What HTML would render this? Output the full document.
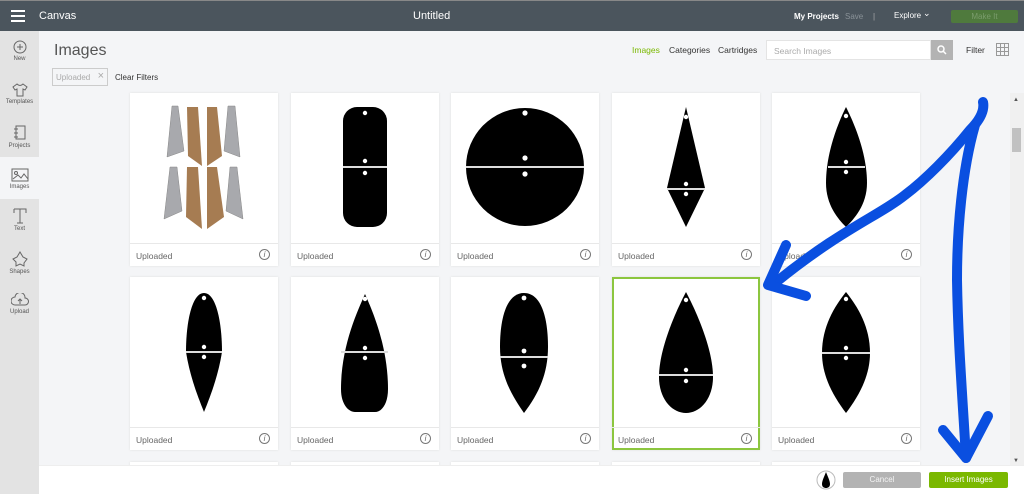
<!DOCTYPE html>
<html><head><meta charset="utf-8"><style>
*{margin:0;padding:0;box-sizing:border-box}
html,body{width:1024px;height:494px;overflow:hidden}
body{background:#f4f5f7;font-family:"Liberation Sans",sans-serif;position:relative}
.hdr{position:absolute;left:0;top:0;width:1024px;height:31px;background:#4b555d;border-top:1px solid #888;color:#fff;font-size:11px}
.hdr span{position:absolute;top:9px}
.side{position:absolute;left:0;top:31px;width:39px;height:463px;background:#e3e3e3}
.si{position:absolute;left:0;width:39px;text-align:center;font-size:6px;color:#555}
.card{position:absolute;width:148px;height:173px;background:#fff;box-shadow:0 0 2px #ddd}
.card svg{position:absolute;left:0;top:0}
.ft{position:absolute;left:0;top:150px;width:148px;height:23px;border-top:1px solid #e8e8e8;font-size:8.5px;color:#666;padding:7px 0 0 6px}
.ft i{position:absolute;right:8px;top:5px;width:11px;height:11px;border:1px solid #777;border-radius:50%;font-size:8px;line-height:9px;text-align:center;color:#666;font-style:italic}
</style></head><body>
<div class="hdr">
 <div style="position:absolute;left:11px;top:9px;width:14px;height:2px;background:#fff;box-shadow:0 5px 0 #fff,0 10px 0 #fff"></div>
 <span style="left:39px">Canvas</span>
 <span style="left:413px">Untitled</span>
 <span style="left:794px;font-size:8px;top:11px;font-weight:bold">My Projects</span>
 <span style="left:845px;font-size:8px;top:11px;color:#8a9298">Save</span>
 <span style="left:873px;font-size:8px;top:11px;color:#aaa">|</span>
 <span style="left:894px;font-size:8px;top:10px">Explore</span>
 <span style="left:923px;top:7px;font-size:9px">&#8964;</span>
 <div style="position:absolute;left:951px;top:9px;width:67px;height:13px;background:#4f7a3d;border-radius:2px;color:#7a9c6c;font-size:8px;text-align:center;line-height:13px">Make It</div>
</div>
<div class="side">
 <div class="si" style="top:126px;height:42px;background:#f4f5f7"></div>
 <div class="si" style="top:9px"><svg width="14" height="14"><circle cx="7" cy="7" r="6" fill="none" stroke="#666"/><path d="M7 4v6M4 7h6" stroke="#666"/></svg><br>New</div>
 <div class="si" style="top:52px"><svg width="16" height="14"><path d="M5 1 1 4l2 3 2-1v7h6V6l2 1 2-3-4-3q-3 3-6 0z" fill="none" stroke="#666"/></svg><br>Templates</div>
 <div class="si" style="top:94px"><svg width="14" height="16"><rect x="3" y="1" width="9" height="13" fill="none" stroke="#666"/><path d="M1 4h4M1 8h4M1 12h4" stroke="#666"/></svg><br>Projects</div>
 <div class="si" style="top:137px"><svg width="18" height="14"><rect x="1" y="1" width="16" height="12" fill="none" stroke="#666"/><circle cx="5" cy="5" r="1.5" fill="none" stroke="#666"/><path d="M2 11l5-4 3 3 3-4 4 5" fill="none" stroke="#666"/></svg><br>Images</div>
 <div class="si" style="top:177px"><svg width="16" height="16"><path d="M2 1h12v4M8 1v14M5 15h6M2 1v4" fill="none" stroke="#666"/></svg><br>Text</div>
 <div class="si" style="top:220px"><svg width="16" height="16"><path d="M8 1l3 5 4 2-3 4 0 3-4-2-4 2 0-4-3-3 4-2z" fill="none" stroke="#666"/></svg><br>Shapes</div>
 <div class="si" style="top:262px"><svg width="18" height="14"><path d="M4 12a4 4 0 010-8 5 5 0 0110 1 3 3 0 010 7z" fill="none" stroke="#666"/><path d="M9 11V6M7 8l2-2 2 2" fill="none" stroke="#666"/></svg><br>Upload</div>
</div>
<div style="position:absolute;left:54px;top:42px;font-size:16px;color:#555">Images</div>
<div style="position:absolute;left:52px;top:68px;width:56px;height:18px;border:1px solid #ccc;background:#f4f5f7;font-size:8px;color:#aaa;padding:4px 0 0 3px">Uploaded <span style="font-size:11px;position:absolute;top:1px;right:3px">&#215;</span></div>
<div style="position:absolute;left:115px;top:73px;font-size:8px;color:#333">Clear Filters</div>
<div style="position:absolute;left:632px;top:45px;font-size:8.5px;color:#7ab800">Images</div>
<div style="position:absolute;left:669px;top:45px;font-size:8.5px;color:#333">Categories</div>
<div style="position:absolute;left:718px;top:45px;font-size:8.5px;color:#333">Cartridges</div>
<div style="position:absolute;left:766px;top:40px;width:165px;height:20px;background:#fff;border:1px solid #e4e4e4;font-size:8.5px;color:#aaa;padding:5px 0 0 7px">Search Images</div>
<div style="position:absolute;left:931px;top:40px;width:22px;height:20px;background:#b3b3b3"><svg width="22" height="20"><circle cx="10" cy="9" r="3" fill="none" stroke="#fff" stroke-width="1.5"/><path d="M12 11l3 3" stroke="#fff" stroke-width="1.5"/></svg></div>
<div style="position:absolute;left:966px;top:45px;font-size:8.5px;color:#333">Filter</div>
<svg style="position:absolute;left:996px;top:43px" width="13" height="13"><path d="M.5.5h12v12H.5zM4.5.5v12M8.5.5v12M.5 4.5h12M.5 8.5h12" fill="none" stroke="#999"/></svg>

<div class="card" style="left:130px;top:93px"><svg width="148" height="150">
<g fill="#a8a9ad" stroke="#888" stroke-width=".5"><polygon points="42,13 48,13 54,58 37,64"/><polygon points="98,13 105,13 110,64 94,58"/><polygon points="40,74 47,74 52,118 34,126"/><polygon points="100,74 107,74 113,126 96,118"/></g>
<g fill="#a67c52"><polygon points="57,14 68,14 72,73 58,63"/><polygon points="77,14 87,14 92,63 77,73"/><polygon points="57,74 68,74 72,136 56,124"/><polygon points="77,74 87,74 94,124 77,136"/></g></svg>
<div class="ft">Uploaded<i>i</i></div></div>

<div class="card" style="left:291px;top:93px"><svg width="148" height="150"><rect x="52" y="14" width="44" height="120" rx="14" fill="#000"/><rect x="52" y="73" width="44" height="2" fill="#ddd"/><g fill="#fff"><circle cx="74" cy="20" r="2.2"/><circle cx="74" cy="68" r="2.2"/><circle cx="74" cy="80" r="2.2"/></g></svg>
<div class="ft">Uploaded<i>i</i></div></div>

<div class="card" style="left:451px;top:93px"><svg width="148" height="150"><circle cx="74" cy="74" r="59" fill="#000"/><rect x="15" y="73" width="118" height="2" fill="#ddd"/><g fill="#fff"><circle cx="74" cy="20" r="2.6"/><circle cx="74" cy="65" r="2.6"/><circle cx="74" cy="81" r="2.6"/></g></svg>
<div class="ft">Uploaded<i>i</i></div></div>

<div class="card" style="left:612px;top:93px"><svg width="148" height="150"><polygon points="74,14 93,95 74,134 55,95" fill="#000"/><rect x="55" y="95" width="38" height="2" fill="#ddd"/><g fill="#fff"><circle cx="74" cy="24" r="2.2"/><circle cx="74" cy="91" r="2.2"/><circle cx="74" cy="101" r="2.2"/></g></svg>
<div class="ft">Uploaded<i>i</i></div></div>

<div class="card" style="left:772px;top:93px"><svg width="148" height="150"><path d="M74 14C66 30 54 60 54 90 54 112 66 126 74 134 82 126 95 112 95 90 95 60 82 30 74 14z" fill="#000"/><rect x="56" y="73" width="37" height="2" fill="#ddd"/><g fill="#fff"><circle cx="74" cy="23" r="2.2"/><circle cx="74" cy="69" r="2.2"/><circle cx="74" cy="79" r="2.2"/></g></svg>
<div class="ft">Uploaded<i>i</i></div></div>

<div class="card" style="left:130px;top:277px"><svg width="148" height="150"><path d="M74 16C62 16 56 45 56 75 60 100 68 120 74 135 80 120 88 100 92 75 92 45 86 16 74 16z" fill="#000"/><rect x="56" y="74" width="36" height="2" fill="#ddd"/><g fill="#fff"><circle cx="74" cy="21" r="2.2"/><circle cx="74" cy="70" r="2.2"/><circle cx="74" cy="80" r="2.2"/></g></svg>
<div class="ft">Uploaded<i>i</i></div></div>

<div class="card" style="left:291px;top:277px"><svg width="148" height="150"><path d="M74 17C66 35 50 70 50 112 50 128 58 135 64 135H84C90 135 97 128 97 112 97 70 82 35 74 17z" fill="#000"/><rect x="50" y="74" width="47" height="2" fill="#ddd"/><g fill="#fff"><circle cx="74" cy="22" r="2.2"/><circle cx="74" cy="71" r="2.2"/><circle cx="74" cy="81" r="2.2"/></g></svg>
<div class="ft">Uploaded<i>i</i></div></div>

<div class="card" style="left:451px;top:277px"><svg width="148" height="150"><path d="M73 16C56 16 49 40 49 70 49 100 62 120 73 136 85 120 97 100 97 70 97 40 90 16 73 16z" fill="#000"/><rect x="49" y="79" width="48" height="2" fill="#ddd"/><g fill="#fff"><circle cx="73" cy="21" r="2.4"/><circle cx="73" cy="74" r="2.4"/><circle cx="73" cy="89" r="2.4"/></g></svg>
<div class="ft">Uploaded<i>i</i></div></div>

<div class="card" style="left:612px;top:277px;border:2px solid #8cc63f"><svg width="148" height="150" style="left:-2px;top:-2px"><path d="M74 15C66 30 47 70 47 100 47 122 60 136 74 136 88 136 101 122 101 100 101 70 82 30 74 15z" fill="#000"/><rect x="47" y="97" width="54" height="2" fill="#ddd"/><g fill="#fff"><circle cx="74" cy="23" r="2.2"/><circle cx="74" cy="93" r="2.2"/><circle cx="74" cy="104" r="2.2"/></g></svg>
<div class="ft" style="top:148px;left:-2px">Uploaded<i>i</i></div></div>

<div class="card" style="left:772px;top:277px"><svg width="148" height="150"><path d="M74 15C62 30 50 50 50 76 50 100 62 120 74 136 86 120 98 100 98 76 98 50 86 30 74 15z" fill="#000"/><rect x="50" y="75" width="48" height="2" fill="#ddd"/><g fill="#fff"><circle cx="74" cy="22" r="2.2"/><circle cx="74" cy="71" r="2.2"/><circle cx="74" cy="81" r="2.2"/></g></svg>
<div class="ft">Uploaded<i>i</i></div></div>

<div class="card" style="left:130px;top:462px;height:4px"></div><div class="card" style="left:291px;top:462px;height:4px"></div><div class="card" style="left:451px;top:462px;height:4px"></div><div class="card" style="left:612px;top:462px;height:4px"></div><div class="card" style="left:772px;top:462px;height:4px"></div>

<div style="position:absolute;left:1010px;top:93px;width:14px;height:372px;background:#f0f0f0"></div>
<div style="position:absolute;left:1012px;top:128px;width:9px;height:24px;background:#c1c1c1"></div>
<div style="position:absolute;left:1013px;top:97px;font-size:6px;color:#555">&#9650;</div>
<div style="position:absolute;left:1013px;top:458px;font-size:6px;color:#555">&#9660;</div>

<div style="position:absolute;left:39px;top:465px;width:985px;height:29px;background:#fff;border-top:1px solid #eee"></div>
<svg style="position:absolute;left:816px;top:469px" width="20" height="22"><circle cx="10" cy="11" r="9" fill="#fff" stroke="#bbb"/><path d="M10 3C8 8 6 12 6 15 6 18 8 19 10 19 12 19 14 18 14 15 14 12 12 8 10 3z" fill="#000"/></svg>
<div style="position:absolute;left:843px;top:472px;width:78px;height:16px;background:#b3b3b3;border-radius:2px;color:#f4f4f4;font-size:8px;text-align:center;line-height:16px">Cancel</div>
<div style="position:absolute;left:929px;top:472px;width:79px;height:16px;background:#7ab800;border-radius:2px;color:#fff;font-size:8px;text-align:center;line-height:16px">Insert Images</div>

<svg style="position:absolute;left:0;top:0" width="1024" height="494"><g fill="none" stroke="#0a4fe0" stroke-width="10" stroke-linecap="round" stroke-linejoin="round">
<path d="M983 102C985 112 978 122 970 130 950 155 925 180 905 195 880 215 840 230 775 283"/>
<path d="M786 245L768 285 806 296"/>
<path d="M975 125C962 170 957 230 957 280 958 340 962 390 966 458"/>
<path d="M943 430L966 458 988 416"/></g></svg>
</body></html>
